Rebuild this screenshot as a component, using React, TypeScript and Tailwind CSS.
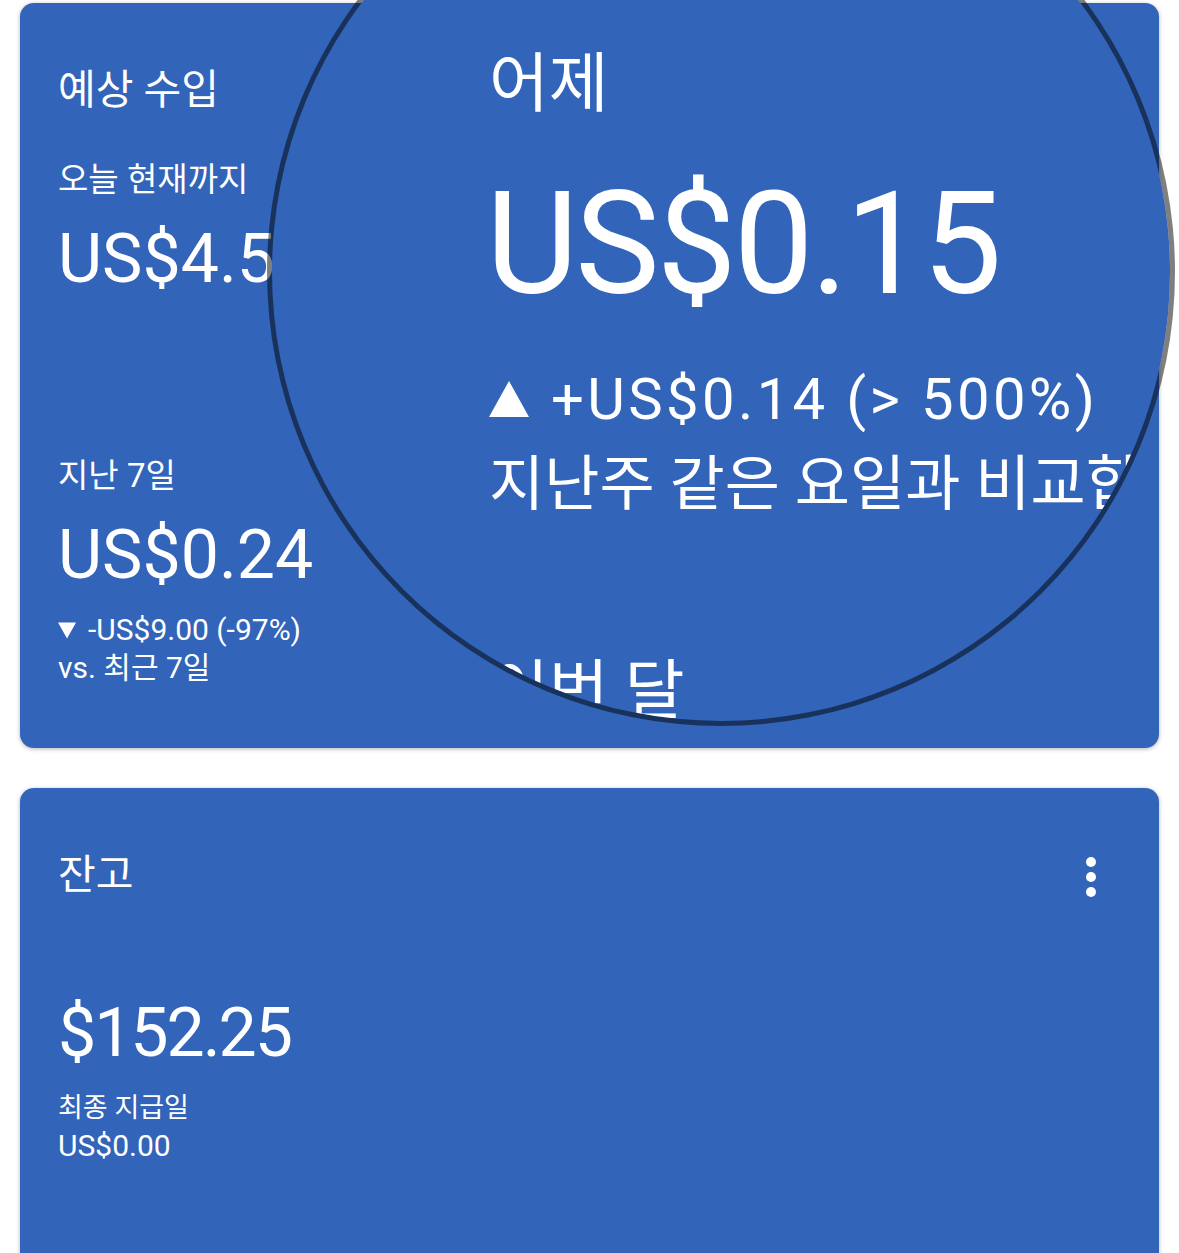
import React from 'react';

const Triangle: React.FC<{ up?: boolean; className?: string }> = ({ up, className }) => (
  <svg viewBox="0 0 20 18" className={className} fill="currentColor" aria-hidden="true">
    {up ? <polygon points="10,0 20,18 0,18" /> : <polygon points="0,0 20,0 10,18" />}
  </svg>
);

const MoreVert: React.FC = () => (
  <svg viewBox="0 0 24 24" className="mt-[-4px] h-[60px] w-[60px]" fill="currentColor" aria-hidden="true">
    <circle cx="12" cy="6" r="2" />
    <circle cx="12" cy="12" r="2" />
    <circle cx="12" cy="18" r="2" />
  </svg>
);

const EarningsCard: React.FC = () => (
  <section className="h-[745px] rounded-[14px] bg-[#3264b9] pl-[38px] pt-[63px] shadow-[0_1px_4px_rgba(0,0,0,0.3)]">
    <h2 className="text-[41px] leading-[48px]">예상 수입</h2>

    <div className="mt-[47px] text-[33px] leading-[38px]">오늘 현재까지</div>
    <div className="mt-[20px] text-[68px] leading-[80px]">US$4.57</div>

    <div className="mt-[158px] text-[33px] leading-[38px]">지난 7일</div>
    <div className="mt-[20px] text-[68px] leading-[80px]">US$0.24</div>
    <div className="mt-[16px] flex items-center text-[30px] leading-[38px]">
      <Triangle className="mr-[12px] h-[17px] w-[18px]" />
      -US$9.00 (-97%)
    </div>
    <div className="text-[30px] leading-[38px]">vs. 최근 7일</div>
  </section>
);

const BalanceCard: React.FC = () => (
  <section className="h-[520px] rounded-[14px] bg-[#3264b9] pl-[38px] pr-[38px] pt-[63px] shadow-[0_1px_4px_rgba(0,0,0,0.3)]">
    <div className="flex h-[48px] items-start justify-between">
      <h2 className="text-[41px] leading-[48px]">잔고</h2>
      <MoreVert />
    </div>
    <div className="mt-[94px] text-[68px] leading-[80px] tracking-[-0.03em]">$152.25</div>
    <div className="mt-[16px] text-[27px] leading-[38px]">최종 지급일</div>
    <div className="text-[30px] leading-[38px]">US$0.00</div>
  </section>
);

// magnified view of the "어제" column, drawn at 2x
const Magnifier: React.FC = () => (
  <div className="absolute left-[267px] top-[-182px] h-[908px] w-[908px] overflow-hidden rounded-full border-[5px] border-black/50 bg-[#3264b9] bg-clip-padding pl-[217px] pt-[223px]">
    <div className="text-[65px] leading-[76px]">어제</div>
    <div className="ml-[-3px] mt-[40px] whitespace-nowrap text-[142px] leading-[166px] tracking-[-0.02em]">US$0.15</div>
    <div className="mt-[31px] flex items-center whitespace-nowrap text-[58px] leading-[80px] tracking-[0.058em]">
      <Triangle up className="mr-[22px] h-[38px] w-[40px]" />
      +US$0.14 (&gt; 500%)
    </div>
    <div className="mt-[6px] whitespace-nowrap text-[60px] leading-[80px]">지난주 같은 요일과 비교합니다</div>
    <div className="mt-[128px] whitespace-nowrap text-[65px] leading-[76px]">이번 달</div>
  </div>
);

export default function App() {
  return (
    <div className="relative h-[1253px] w-full overflow-hidden bg-white font-['Roboto','Noto_Sans_CJK_KR',sans-serif] text-white">
      <div className="flex flex-col gap-[40px] px-[20px] pt-[3px]">
        <EarningsCard />
        <BalanceCard />
      </div>
      <Magnifier />
    </div>
  );
}
